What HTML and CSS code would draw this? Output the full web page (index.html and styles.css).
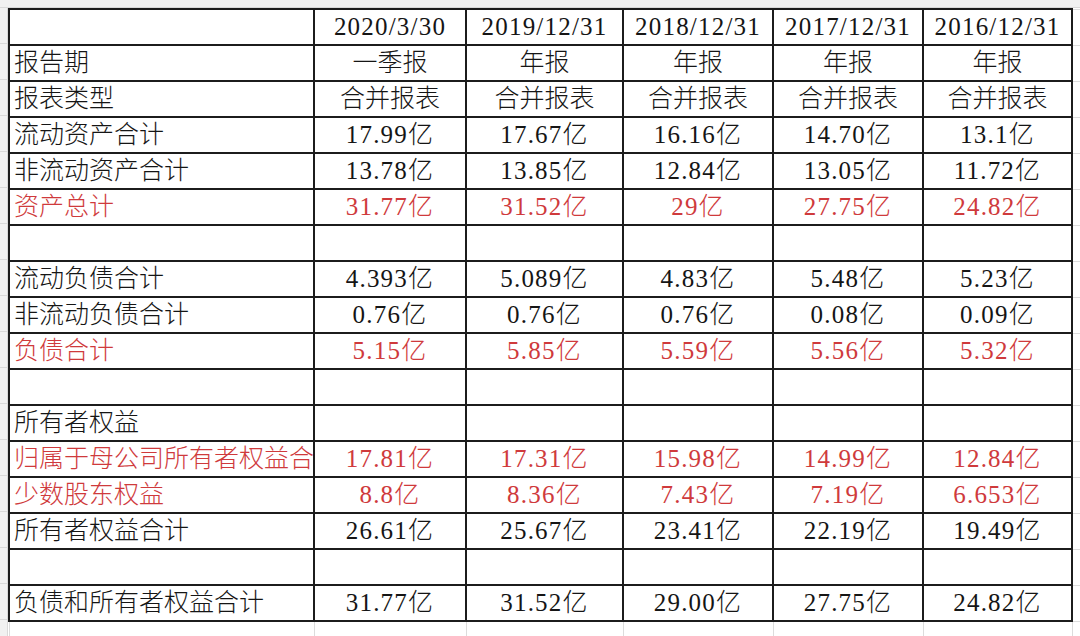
FILE: index.html
```html
<!DOCTYPE html>
<html lang="zh-CN">
<head>
<meta charset="utf-8">
<title>资产负债表</title>
<link rel="stylesheet" href="styles.css">
</head>
<body>
<div class="topbar"></div>
<div class="main">
  <div class="gutter"></div>
  <table class="sheet">
    <colgroup>
      <col class="c-label"><col class="c-a"><col class="c-b"><col class="c-c"><col class="c-d"><col class="c-e"><col class="c-ghost">
    </colgroup>
    <tbody>
      <tr><td class="label"></td><td>2020/3/30</td><td>2019/12/31</td><td>2018/12/31</td><td>2017/12/31</td><td>2016/12/31</td><td class="ghost"></td></tr>
      <tr class="cn"><td class="label">报告期</td><td>一季报</td><td>年报</td><td>年报</td><td>年报</td><td>年报</td><td class="ghost"></td></tr>
      <tr class="cn"><td class="label">报表类型</td><td>合并报表</td><td>合并报表</td><td>合并报表</td><td>合并报表</td><td>合并报表</td><td class="ghost"></td></tr>
      <tr><td class="label">流动资产合计</td><td>17.99亿</td><td>17.67亿</td><td>16.16亿</td><td>14.70亿</td><td>13.1亿</td><td class="ghost"></td></tr>
      <tr><td class="label">非流动资产合计</td><td>13.78亿</td><td>13.85亿</td><td>12.84亿</td><td>13.05亿</td><td>11.72亿</td><td class="ghost"></td></tr>
      <tr class="red"><td class="label">资产总计</td><td>31.77亿</td><td>31.52亿</td><td>29亿</td><td>27.75亿</td><td>24.82亿</td><td class="ghost"></td></tr>
      <tr><td class="label"></td><td></td><td></td><td></td><td></td><td></td><td class="ghost"></td></tr>
      <tr><td class="label">流动负债合计</td><td>4.393亿</td><td>5.089亿</td><td>4.83亿</td><td>5.48亿</td><td>5.23亿</td><td class="ghost"></td></tr>
      <tr><td class="label">非流动负债合计</td><td>0.76亿</td><td>0.76亿</td><td>0.76亿</td><td>0.08亿</td><td>0.09亿</td><td class="ghost"></td></tr>
      <tr class="red"><td class="label">负债合计</td><td>5.15亿</td><td>5.85亿</td><td>5.59亿</td><td>5.56亿</td><td>5.32亿</td><td class="ghost"></td></tr>
      <tr><td class="label"></td><td></td><td></td><td></td><td></td><td></td><td class="ghost"></td></tr>
      <tr><td class="label">所有者权益</td><td></td><td></td><td></td><td></td><td></td><td class="ghost"></td></tr>
      <tr class="red"><td class="label">归属于母公司所有者权益合</td><td>17.81亿</td><td>17.31亿</td><td>15.98亿</td><td>14.99亿</td><td>12.84亿</td><td class="ghost"></td></tr>
      <tr class="red"><td class="label">少数股东权益</td><td>8.8亿</td><td>8.36亿</td><td>7.43亿</td><td>7.19亿</td><td>6.653亿</td><td class="ghost"></td></tr>
      <tr><td class="label">所有者权益合计</td><td>26.61亿</td><td>25.67亿</td><td>23.41亿</td><td>22.19亿</td><td>19.49亿</td><td class="ghost"></td></tr>
      <tr><td class="label"></td><td></td><td></td><td></td><td></td><td></td><td class="ghost"></td></tr>
      <tr><td class="label">负债和所有者权益合计</td><td>31.77亿</td><td>31.52亿</td><td>29.00亿</td><td>27.75亿</td><td>24.82亿</td><td class="ghost"></td></tr>
      <tr class="ghost-row"><td></td><td></td><td></td><td></td><td></td><td></td><td class="ghost"></td></tr>
    </tbody>
  </table>
</div>
</body>
</html>
```

FILE: styles.css
```css
html, body {
  margin: 0;
  padding: 0;
  background: #ffffff;
  overflow: hidden;
}

body {
  width: 1080px;
  height: 636px;
  font-family: "Liberation Serif", "Noto Sans CJK SC", serif;
  color: #151515;
}

.topbar {
  height: 8px;
  background: #f1f1f1;
  border-bottom: 1px solid #d9d9d9;
  box-sizing: border-box;
}

.main {
  display: flex;
  align-items: flex-start;
}

.gutter {
  flex: 0 0 7px;
  height: 640px;
  background-color: #f1f1f1;
  background-image: repeating-linear-gradient(to bottom, transparent 0, transparent 35px, #d9d9d9 35px, #d9d9d9 36px);
  border-right: 1px solid #d9d9d9;
}

.sheet {
  border-collapse: collapse;
  table-layout: fixed;
  width: 1072px;
  margin-top: 0;
}

.c-label { width: 305px; }
.c-a { width: 152px; }
.c-b { width: 157px; }
.c-c { width: 150px; }
.c-d { width: 150px; }
.c-e { width: 149px; }
.c-ghost { width: 9px; }

.sheet td {
  height: 34px;
  padding: 0;
  border: 2px solid #1c1c1c;
  font-size: 25px;
  line-height: 34px;
  text-align: center;
  white-space: nowrap;
  overflow: hidden;
  font-weight: 300;
  letter-spacing: 1.2px;
}

.sheet tr.cn td,
.sheet td.label {
  letter-spacing: 0;
}

.sheet td.label {
  text-align: left;
  padding-left: 4px;
}

.sheet td.ghost {
  border: 1px solid #dcdcdc;
  border-left: 2px solid #1c1c1c;
}

.sheet tr.ghost-row td {
  border: 1px solid #dcdcdc;
  border-top: 2px solid #1c1c1c;
}

.sheet tr.ghost-row td.ghost {
  border-top: 1px solid #dcdcdc;
  border-left: 1px solid #dcdcdc;
}

.red td {
  color: #cf3a3c;
}
```
